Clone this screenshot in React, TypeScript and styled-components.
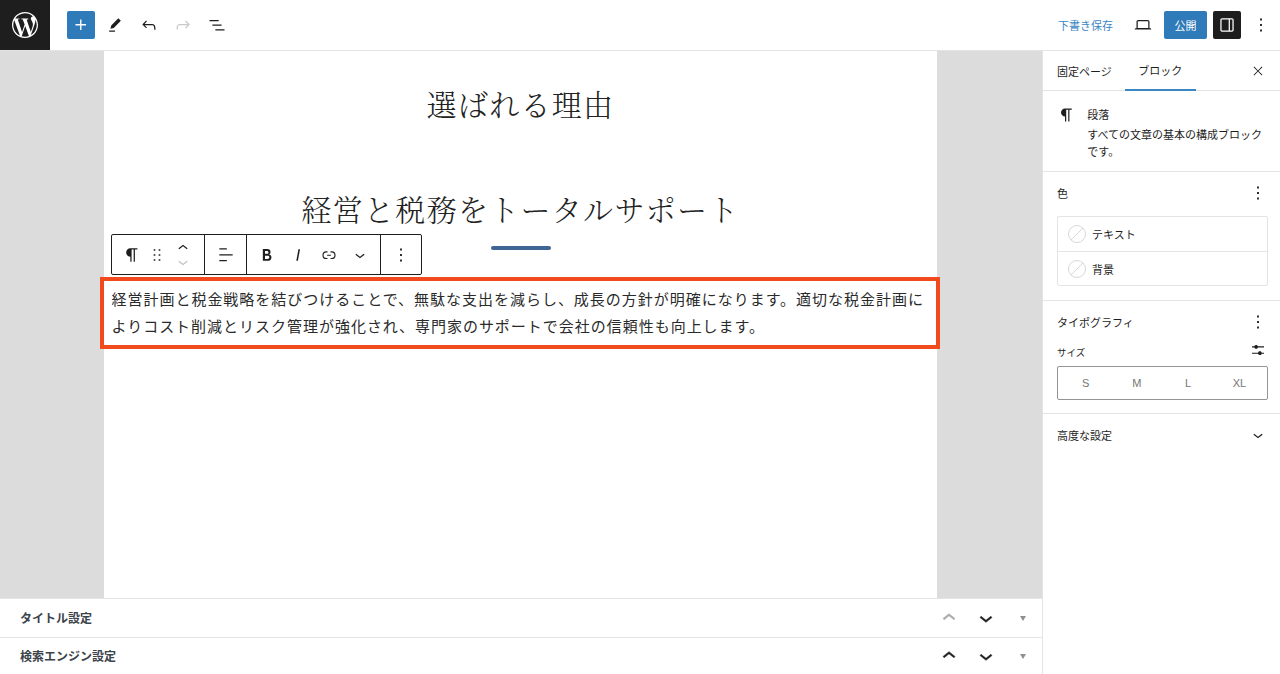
import styled, { createGlobalStyle } from "styled-components";
import { SiWordpress } from "react-icons/si";

const ICONS: Record<string, string> = {
  plus: "M11 12.5V17.5H12.5V12.5H17.5V11H12.5V6H11V11H6V12.5H11Z",
  pencil: "m19 7-3-3-8.5 8.5-1 4 4-1L19 7Zm-7 11.5H5V20h7v-1.5Z",
  undo: "M18.3 11.7c-.6-.6-1.4-.9-2.3-.9H6.7l2.9-3.3-1.1-1-4.5 5L8.5 16l1-1-2.7-2.7H16c.5 0 .9.2 1.3.5 1 1 1 3.4 1 4.5v.3h1.5v-.2c0-1.5 0-4.3-1.5-5.7z",
  redo: "M15.6 6.5l-1.1 1 2.9 3.3H8c-.9 0-1.7.3-2.3.9-1.4 1.5-1.4 4.2-1.4 5.6v.2h1.5v-.3c0-1.1 0-3.5 1-4.5.3-.3.7-.5 1.3-.5h9.2L14.5 15l1.1 1.1 4.6-4.6-4.6-5z",
  list: "M3 6h11v1.5H3V6Zm3.5 5.5h11V13h-11v-1.5ZM21 17H10v1.5h11V17Z",
  laptop: "M20.5 16h-.7V8c0-1.1-.9-2-2-2H6.2c-1.1 0-2 .9-2 2v8h-.7c-.8 0-1.5.7-1.5 1.5h20c0-.8-.7-1.5-1.5-1.5zM5.7 8c0-.3.2-.5.5-.5h11.6c.3 0 .5.2.5.5v7.6H5.7V8z",
  drawer: "M18 4H6c-1.1 0-2 .9-2 2v12c0 1.1.9 2 2 2h12c1.1 0 2-.9 2-2V6c0-1.1-.9-2-2-2zm-4 14.5H6c-.3 0-.5-.2-.5-.5V6c0-.3.2-.5.5-.5h8v13zm4.5-.5c0 .3-.2.5-.5.5h-2.5v-13H18c.3 0 .5.2.5.5v12z",
  more: "M13 19h-2v-2h2v2zm0-6h-2v-2h2v2zm0-6h-2V5h2v2z",
  close: "m13.06 12 6.47-6.47-1.06-1.06L12 10.94 5.53 4.47 4.47 5.53 10.94 12l-6.47 6.47 1.06 1.06L12 13.06l6.47 6.47 1.06-1.06L13.06 12Z",
  paragraph: "m9.99609 14v-.2251l.00391.0001v6.225h1.5v-14.5h2.5v14.5h1.5v-14.5h3v-1.5h-8.50391c-2.76142 0-5 2.23858-5 5 0 2.7614 2.23858 5 5 5z",
  drag: "M8 7h2V5H8v2zm0 6h2v-2H8v2zm0 6h2v-2H8v2zm6-14v2h2V5h-2zm0 8h2v-2h-2v2zm0 6h2v-2h-2v2z",
  up: "M6.5 12.4L12 8l5.5 4.4-.9 1.2L12 10l-4.5 3.6-1-1.2z",
  down: "M17.5 11.6L12 16l-5.5-4.4.9-1.2L12 14l4.5-3.6 1 1.2z",
  align: "M13 5.5H4V4h9v1.5Zm7 7H4V11h16v1.5Zm-7 7H4V18h9v1.5Z",
  bold: "M14.7 11.3c1-.6 1.5-1.6 1.5-3 0-2.3-1.3-3.4-4-3.4H7v14h5.8c1.4 0 2.5-.3 3.3-1 .8-.7 1.2-1.7 1.2-2.9.1-1.9-.8-3.1-2.6-3.7zm-5.1-4h2.3c.6 0 1.1.1 1.4.4.3.3.5.7.5 1.2s-.2 1-.5 1.2c-.3.3-.8.4-1.4.4H9.6V7.3zm4.6 9c-.4.3-1 .4-1.7.4H9.6v-3.9h2.9c.7 0 1.3.2 1.7.5.4.3.6.8.6 1.5s-.2 1.2-.6 1.5z",
  italic: "M12.5 5L10 19h1.9l2.5-14z",
  link: "M10 17.389H8.444A5.194 5.194 0 1 1 8.444 7H10v1.5H8.444a3.694 3.694 0 0 0 0 7.389H10v1.5ZM14 7h1.556a5.194 5.194 0 0 1 0 10.39H14v-1.5h1.556a3.694 3.694 0 0 0 0-7.39H14V7Zm-4.5 6h5v-1.5h-5V13Z",
  sliders: "M14.5 13.8c-1.1 0-2.1.7-2.4 1.8H4V17h8.1c.3 1 1.3 1.8 2.4 1.8s2.1-.7 2.4-1.8H20v-1.5h-3.1c-.3-1-1.3-1.7-2.4-1.7zM11.9 7c-.3-1-1.3-1.8-2.4-1.8S7.4 6 7.1 7H4v1.5h3.1c.3 1 1.3 1.8 2.4 1.8s2.1-.7 2.4-1.8H20V7h-8.1z",
};

const Icon = ({ name, size = 24 }: { name: string; size?: number }) => (
  <svg width={size} height={size} viewBox="0 0 24 24" fill="currentColor" aria-hidden>
    <path d={ICONS[name]} />
  </svg>
);

const GlobalStyle = createGlobalStyle`
  html, body {
    margin: 0;
    height: 100%;
    overflow: hidden;
    background: #fff;
    color: #1e1e1e;
    font-family: "Noto Sans CJK JP", "Noto Sans", sans-serif;
  }
  * { box-sizing: border-box; }
`;

const Shell = styled.div`
  width: 1280px;
  height: 674px;
  display: flex;
  flex-direction: column;
`;

const Header = styled.header`
  height: 51px;
  flex: none;
  display: flex;
  align-items: center;
  border-bottom: 1px solid #e4e4e4;
`;

const Logo = styled.div`
  width: 50px;
  height: 50px;
  flex: none;
  background: #1e1e1e;
  color: #fff;
  display: flex;
  align-items: center;
  justify-content: center;
`;

const Tools = styled.div`
  display: flex;
  align-items: center;
  gap: 6px;
  margin-left: 17px;
`;

const ToolButton = styled.span<{ $faded?: boolean }>`
  width: 28px;
  height: 28px;
  display: flex;
  align-items: center;
  justify-content: center;
  color: ${(p) => (p.$faded ? "#c8c8c8" : "#1e1e1e")};
`;

const PlusButton = styled(ToolButton)`
  background: #2f7ab9;
  color: #fff;
  border-radius: 2px;
`;

const Actions = styled.div`
  margin-left: auto;
  display: flex;
  align-items: center;
  height: 28px;
  padding-right: 5px;
`;

const SaveLink = styled.span`
  color: #3b86c4;
  font-size: 11px;
  margin-right: 16px;
`;

const PublishButton = styled.span`
  width: 43px;
  height: 28px;
  margin: 0 6px 0 7px;
  background: #2f7ab9;
  color: #fff;
  font-size: 11px;
  border-radius: 2px;
  display: flex;
  align-items: center;
  justify-content: center;
`;

const DrawerButton = styled(ToolButton)`
  background: #1e1e1e;
  color: #fff;
  border-radius: 2px;
  margin-right: 6px;
`;

const Body = styled.div`
  flex: 1;
  min-height: 0;
  display: flex;
`;

const Main = styled.main`
  width: 1042px;
  flex: none;
  display: flex;
  flex-direction: column;
`;

const Canvas = styled.div`
  flex: 1;
  min-height: 0;
  background: #dcdcdc;
  padding: 0 105px 0 104px;
`;

const Page = styled.article`
  height: 100%;
  background: #fff;
  padding-top: 30px;
`;

const Heading = styled.h2`
  margin: 0;
  font-family: "Noto Serif CJK JP", "Noto Sans CJK JP", serif;
  font-weight: 300;
  font-size: 30px;
  line-height: 44px;
  letter-spacing: 1.3px;
  text-align: center;
  color: #222;
`;

const SubHeading = styled(Heading)`
  margin-top: 61px;
`;

const Bar = styled.div`
  width: 60px;
  height: 4px;
  margin: 16px auto 0;
  border-radius: 2px;
  background: #3f6594;
`;

const ParagraphBlock = styled.div`
  position: relative;
  margin: 27px -3px 0 -4px;
`;

const BlockToolbar = styled.div`
  position: absolute;
  left: 11px;
  bottom: calc(100% + 2px);
  height: 41px;
  display: flex;
  background: #fff;
  border: 1px solid #1e1e1e;
  border-radius: 2px;
`;

const ToolbarGroup = styled.div<{ $width: number; $gap?: number }>`
  width: ${(p) => p.$width}px;
  display: flex;
  align-items: center;
  justify-content: center;
  gap: ${(p) => p.$gap ?? 6}px;
  & + & {
    border-left: 1px solid #1e1e1e;
  }
`;

const ToolbarIcon = styled.span<{ $width?: number }>`
  width: ${(p) => p.$width ?? 24}px;
  flex: none;
  display: flex;
  align-items: center;
  justify-content: center;
`;

const Mover = styled.span`
  width: 22px;
  height: 30px;
  display: flex;
  flex-direction: column;
  align-items: center;
  justify-content: center;
  svg {
    margin: -3px 0;
  }
  svg:last-child {
    color: #c0c0c0;
  }
`;

const Paragraph = styled.p`
  margin: 0;
  padding: 3.5px 6.5px 5.5px 7.5px;
  border: 4px solid #f04a1d;
  font-size: 15px;
  line-height: 27.5px;
  letter-spacing: 0.98px;
  color: #2a2a2a;
`;

const MetaRow = styled.div`
  height: 39px;
  flex: none;
  display: flex;
  align-items: center;
  padding-left: 20px;
  background: #fff;
  border-top: 1px solid #e4e4e4;
  &:last-child {
    height: 37px;
  }
`;

const MetaTitle = styled.span`
  flex: 1;
  margin-top: -2px;
  font-size: 12px;
  font-weight: 700;
  color: #3c434a;
`;

const MetaArrow = styled.span<{ $faded?: boolean }>`
  width: 37px;
  display: flex;
  justify-content: center;
  color: ${(p) => (p.$faded ? "#a7aaad" : "#1e1e1e")};
  svg {
    stroke: currentColor;
    stroke-width: 0.5;
  }
`;

const MetaCaret = styled.span`
  width: 38px;
  display: flex;
  justify-content: center;
  &::before {
    content: "";
    border-style: solid;
    border-width: 5px 3.5px 0;
    border-color: #8c8f94 transparent transparent;
  }
`;

const Sidebar = styled.aside`
  flex: 1;
  border-left: 1px solid #e4e4e4;
  font-size: 11px;
  color: #1e1e1e;
`;

const Tabs = styled.div`
  height: 40px;
  display: flex;
  align-items: stretch;
  padding-left: 14px;
  border-bottom: 1px solid #e4e4e4;
`;

const Tab = styled.span<{ $active?: boolean }>`
  display: flex;
  align-items: center;
  justify-content: center;
  height: 40px;
  width: ${(p) => (p.$active ? "71px" : "auto")};
  margin-left: ${(p) => (p.$active ? "13px" : "0")};
  border-bottom: ${(p) => (p.$active ? "2px solid #3b86c4" : "none")};
`;

const TabClose = styled.span`
  margin-left: auto;
  margin-right: 15px;
  display: flex;
  align-items: center;
`;

const BlockCard = styled.section`
  height: 81px;
  padding: 13px 12px 0 14px;
  display: flex;
  gap: 11px;
  border-bottom: 1px solid #e4e4e4;
`;

const BlockInfo = styled.div`
  line-height: 17px;
`;

const BlockTitle = styled.div`
  margin-top: 2px;
  margin-bottom: 3px;
`;

const SettingsPanel = styled.section<{ $height: number }>`
  height: ${(p) => p.$height}px;
  padding: 0 12px 0 14px;
  border-bottom: 1px solid #e4e4e4;
`;

const PanelHead = styled.div`
  height: 42px;
  display: flex;
  align-items: center;
  justify-content: space-between;
  margin-right: -1px;
`;

const AdvancedHead = styled(PanelHead)`
  margin-right: 0;
  padding: 0 12px 0 14px;
`;

const ColorList = styled.div`
  margin-top: 2px;
  border: 1px solid #e4e4e4;
  border-radius: 2px;
`;

const ColorRow = styled.div`
  height: 34px;
  display: flex;
  align-items: center;
  gap: 6px;
  padding-left: 10px;
  & + & {
    border-top: 1px solid #e4e4e4;
  }
`;

const Swatch = styled.span`
  width: 18px;
  height: 18px;
  border-radius: 50%;
  border: 1px solid #d8d8d8;
  background: linear-gradient(-45deg, transparent 48%, #d8d8d8 48%, #d8d8d8 52%, transparent 52%);
`;

const SizeHead = styled.div`
  height: 24px;
  margin-top: -3px;
  display: flex;
  align-items: center;
  justify-content: space-between;
  font-size: 9.5px;
  margin-right: 1px;
  svg {
    margin: -4px 0 0;
  }
`;

const SizeToggle = styled.div`
  height: 34px;
  margin-top: 2px;
  display: grid;
  grid-template-columns: repeat(4, 1fr);
  align-items: center;
  padding: 0 2px;
  border: 1px solid #949494;
  border-radius: 2px;
  font-family: "Liberation Sans", sans-serif;
  font-size: 11px;
  text-align: center;
  color: #757575;
`;

const App = () => {
  return (
    <Shell>
      <GlobalStyle />
      <Header>
        <Logo>
          <SiWordpress size={26} />
        </Logo>
        <Tools>
          <PlusButton><Icon name="plus" size={22} /></PlusButton>
          <ToolButton><Icon name="pencil" size={20} /></ToolButton>
          <ToolButton><Icon name="undo" size={20} /></ToolButton>
          <ToolButton $faded><Icon name="redo" size={20} /></ToolButton>
          <ToolButton><Icon name="list" size={20} /></ToolButton>
        </Tools>
        <Actions>
          <SaveLink>下書き保存</SaveLink>
          <ToolButton><Icon name="laptop" size={20} /></ToolButton>
          <PublishButton>公開</PublishButton>
          <DrawerButton><Icon name="drawer" size={20} /></DrawerButton>
          <ToolButton><Icon name="more" size={22} /></ToolButton>
        </Actions>
      </Header>
      <Body>
        <Main>
          <Canvas>
            <Page>
              <Heading>選ばれる理由</Heading>
              <SubHeading>経営と税務をトータルサポート</SubHeading>
              <Bar />
              <ParagraphBlock>
                <BlockToolbar>
                  <ToolbarGroup $width={92} $gap={5}>
                    <ToolbarIcon $width={20}><Icon name="paragraph" size={20} /></ToolbarIcon>
                    <ToolbarIcon $width={20}><Icon name="drag" size={20} /></ToolbarIcon>
                    <Mover>
                      <Icon name="up" size={20} />
                      <Icon name="down" size={20} />
                    </Mover>
                  </ToolbarGroup>
                  <ToolbarGroup $width={42}>
                    <Icon name="align" size={20} />
                  </ToolbarGroup>
                  <ToolbarGroup $width={134} $gap={7}>
                    <ToolbarIcon><Icon name="bold" size={20} /></ToolbarIcon>
                    <ToolbarIcon><Icon name="italic" size={20} /></ToolbarIcon>
                    <ToolbarIcon><Icon name="link" size={18} /></ToolbarIcon>
                    <ToolbarIcon><Icon name="down" size={20} /></ToolbarIcon>
                  </ToolbarGroup>
                  <ToolbarGroup $width={41}>
                    <Icon name="more" size={22} />
                  </ToolbarGroup>
                </BlockToolbar>
                <Paragraph>
                  経営計画と税金戦略を結びつけることで、無駄な支出を減らし、成長の方針が明確になります。適切な税金計画によりコスト削減とリスク管理が強化され、専門家のサポートで会社の信頼性も向上します。
                </Paragraph>
              </ParagraphBlock>
            </Page>
          </Canvas>
          <MetaRow>
            <MetaTitle>タイトル設定</MetaTitle>
            <MetaArrow $faded><Icon name="up" size={26} /></MetaArrow>
            <MetaArrow><Icon name="down" size={26} /></MetaArrow>
            <MetaCaret />
          </MetaRow>
          <MetaRow>
            <MetaTitle>検索エンジン設定</MetaTitle>
            <MetaArrow><Icon name="up" size={26} /></MetaArrow>
            <MetaArrow><Icon name="down" size={26} /></MetaArrow>
            <MetaCaret />
          </MetaRow>
        </Main>
        <Sidebar>
          <Tabs>
            <Tab>固定ページ</Tab>
            <Tab $active>ブロック</Tab>
            <TabClose><Icon name="close" size={14} /></TabClose>
          </Tabs>
          <BlockCard>
            <Icon name="paragraph" size={22} />
            <BlockInfo>
              <BlockTitle>段落</BlockTitle>
              すべての文章の基本の構成ブロックです。
            </BlockInfo>
          </BlockCard>
          <SettingsPanel $height={129}>
            <PanelHead>色<Icon name="more" size={22} /></PanelHead>
            <ColorList>
              <ColorRow><Swatch />テキスト</ColorRow>
              <ColorRow><Swatch />背景</ColorRow>
            </ColorList>
          </SettingsPanel>
          <SettingsPanel $height={113}>
            <PanelHead>タイポグラフィ<Icon name="more" size={22} /></PanelHead>
            <SizeHead>サイズ<Icon name="sliders" size={18} /></SizeHead>
            <SizeToggle>
              <span>S</span>
              <span>M</span>
              <span>L</span>
              <span>XL</span>
            </SizeToggle>
          </SettingsPanel>
          <AdvancedHead>
            高度な設定<Icon name="down" size={20} />
          </AdvancedHead>
        </Sidebar>
      </Body>
    </Shell>
  );
};

export default App;
